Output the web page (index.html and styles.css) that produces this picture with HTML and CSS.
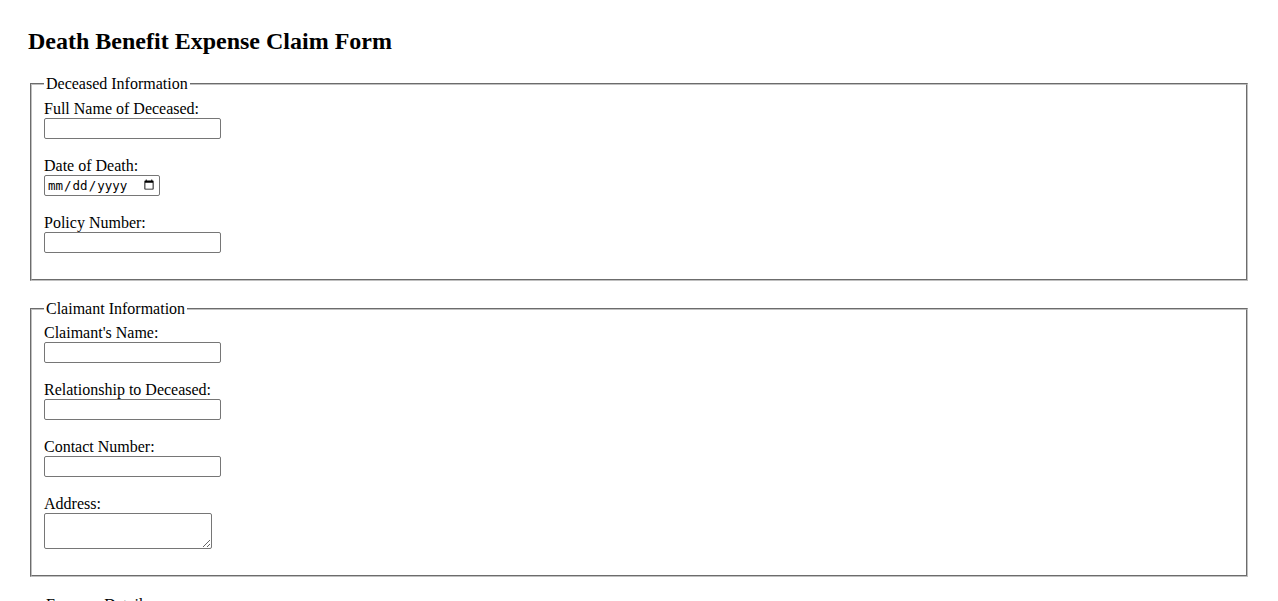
FILE: index.html
```html
<!DOCTYPE html>
<html lang="en">
<head>
<meta charset="utf-8">
<title>Death Benefit Expense Claim Form</title>
<link rel="stylesheet" href="styles.css">
</head>
<body>
<h2 class="title">Death Benefit Expense Claim Form</h2>
<form class="claim-form">
  <fieldset class="section">
    <legend class="section-legend">Deceased Information</legend>
    <label class="field-label" for="deceasedName">Full Name of Deceased:</label><br>
    <input class="text-input" type="text" id="deceasedName"><br><br>
    <label class="field-label" for="dateOfDeath">Date of Death:</label><br>
    <input class="date-input" type="date" id="dateOfDeath"><br><br>
    <label class="field-label" for="policyNumber">Policy Number:</label><br>
    <input class="text-input" type="text" id="policyNumber"><br><br>
  </fieldset>
  <fieldset class="section section-tight">
    <legend class="section-legend">Claimant Information</legend>
    <label class="field-label" for="claimantName">Claimant's Name:</label><br>
    <input class="text-input" type="text" id="claimantName"><br><br>
    <label class="field-label" for="relationship">Relationship to Deceased:</label><br>
    <input class="text-input" type="text" id="relationship"><br><br>
    <label class="field-label" for="contactNumber">Contact Number:</label><br>
    <input class="text-input" type="text" id="contactNumber"><br><br>
    <label class="field-label" for="address">Address:</label><br>
    <textarea class="text-area" id="address"></textarea><br><br>
  </fieldset>
  <fieldset class="section">
    <legend class="section-legend">Expense Details</legend>
    <label class="field-label" for="funeralCost">Funeral Expenses:</label><br>
    <input class="text-input" type="text" id="funeralCost"><br><br>
    <label class="field-label" for="otherCost">Other Expenses:</label><br>
    <input class="text-input" type="text" id="otherCost"><br><br>
  </fieldset>
</form>
</body>
</html>
```

FILE: styles.css
```css
html, body {
  background: #ffffff;
}
body {
  margin: 0;
  padding: 28px;
  font-family: "Liberation Serif", "Times New Roman", serif;
  font-size: 16px;
  color: #000000;
}
.title {
  margin: 0 0 20px 0;
  font-size: 24px;
  font-weight: bold;
  line-height: 27px;
}
.claim-form {
  margin: 0;
}
.section {
  margin: 0 2px 19px 2px;
  padding: 7px 12px 8px 12px;
  border: 2px groove #c0c0c0;
}
.section-tight {
  padding-top: 6px;
}
.section-legend {
  padding: 0 2px;
  margin-left: 0;
  line-height: 18px;
}
.field-label {
  line-height: 18px;
}
.text-input,
.date-input {
  box-sizing: border-box;
  height: 21px;
  margin: 0;
  padding: 1px 2px;
  border: 1px solid #767676;
  border-radius: 2px;
  font-family: "DejaVu Sans Mono", "Liberation Mono", monospace;
  font-size: 12.5px;
  vertical-align: middle;
}
.text-input {
  width: 177px;
}
.date-input {
  width: 116px;
}
.text-area {
  box-sizing: border-box;
  width: 168px;
  height: 36px;
  margin: 0;
  padding: 2px;
  border: 1px solid #767676;
  border-radius: 2px;
  vertical-align: middle;
  font-family: "Liberation Mono", monospace;
  font-size: 13px;
}
```
